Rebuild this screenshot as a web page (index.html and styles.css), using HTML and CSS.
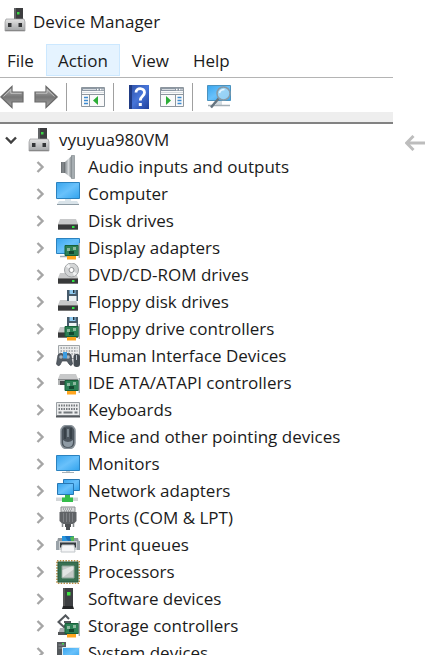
FILE: index.html
```html
<!DOCTYPE html>
<html lang="en">
<head>
<meta charset="utf-8">
<title>Device Manager</title>
<link rel="stylesheet" href="styles.css">
</head>
<body>
<!-- shared icon parts -->
<svg class="defs" width="0" height="0" aria-hidden="true">
  <defs>
    <linearGradient id="screen" x1="0" y1="0" x2="1" y2="1">
      <stop offset="0" stop-color="#38a5ed"/><stop offset=".5" stop-color="#69c1fb"/><stop offset="1" stop-color="#31a3ed"/>
    </linearGradient>
    <linearGradient id="metal" x1="0" y1="0" x2="0" y2="1">
      <stop offset="0" stop-color="#e4e4e4"/><stop offset="1" stop-color="#a2a4a6"/>
    </linearGradient>
    <linearGradient id="steel" x1="0" y1="0" x2="1" y2="0">
      <stop offset="0" stop-color="#858b8f"/><stop offset=".5" stop-color="#d5d9db"/><stop offset="1" stop-color="#777d81"/>
    </linearGradient>
    <linearGradient id="arrow" x1="0" y1="0" x2="0" y2="1">
      <stop offset="0" stop-color="#b9b9b9"/><stop offset=".5" stop-color="#777"/><stop offset="1" stop-color="#a5a5a5"/>
    </linearGradient>
    <linearGradient id="book" x1="0" y1="0" x2="1" y2="1">
      <stop offset="0" stop-color="#2d4fa5"/><stop offset=".5" stop-color="#4775d8"/><stop offset="1" stop-color="#1f3f9b"/>
    </linearGradient>
  </defs>
  <symbol id="i-chevron" viewBox="0 0 16 16"><path d="M5.500 3l5 5-5 5" fill="none" stroke="currentColor" stroke-width="2.400"/></symbol>
  <symbol id="i-device" viewBox="0 0 24 24">
    <path d="M11 0h9v12h-9z" fill="#3c3d3f"/><path d="M11 0h2v12h-2z" fill="#626466"/><path d="M14 4h2.500v2.500H14z" fill="#3bd446"/>
    <path d="M3 11h18l1 3v9H2v-9z" fill="url(#metal)" stroke="#98999b" stroke-width=".7"/>
    <path d="M2.500 22.500h19" stroke="#888"/><path d="M5 15h3.500v4H5zM15.500 15H19v4h-3.500z" fill="#343638"/>
  </symbol>
  <symbol id="i-drive" viewBox="0 0 24 24">
    <path d="M4 10h16l2 5H2z" fill="#c8c9ca"/><path d="M2 15h20v6H2z" fill="#38393a"/>
    <path d="M2 15h20v1H2z" fill="#777"/><path d="M2 20.500h20" stroke="#777"/><path d="M16 17h2.500v2H16z" fill="#2fe344"/>
  </symbol>
  <symbol id="i-card" viewBox="0 0 24 24">
    <path d="M11 20h9v3.500h-9z" fill="#ffa51f"/>
    <path d="M9 9.500h13.500v10H9z" fill="#2d8055" stroke="#176039"/>
    <path d="M11 12h3v3h-3zM17 11h3v3h-3z" fill="#8cb89e"/><path d="M13 15h5v3h-5z" fill="#14482f"/><path d="M23.300 7v15" stroke="#a5abb0" stroke-width="1.400"/>
  </symbol>
  <symbol id="i-floppy" viewBox="0 0 24 24">
    <path d="M11 0h11v11H11z" fill="#465b6b"/><path d="M13.500 0h6v4h-6z" fill="#8ec9ef"/><path d="M13 6h7.500v5H13z" fill="#eef3f5"/><path d="M17 0h1.500v3H17z" fill="#23313b"/>
  </symbol>
  <symbol id="i-keyboard" viewBox="0 0 24 24">
    <path d="M.5 4.500h23v13H.5z" fill="#ebeced" stroke="#999fa3"/><path d="M0 17.500h24v2H0z" fill="#55595d"/>
    <path d="M2.500 7.500h19M2.500 11h19" stroke="#74797d" stroke-width="1.800" stroke-dasharray="1.500 1"/>
    <path d="M2.500 14.500h3m2 0h9m2 0h3" stroke="#74797d" stroke-width="1.800"/>
  </symbol>
  <!-- window frame of the two pane buttons -->
  <symbol id="i-pane" viewBox="0 0 24 24">
    <path d="M.5 2.500h23v19H.5z" fill="#fafafa" stroke="#8d969e"/><path d="M1 3h22v3H1z" fill="#8c97a3"/>
    <path d="M2 4.500h13" stroke="#d6dbe0"/><path d="M16 4.500h1.500m1.500 0h1.500m1 0h1" stroke="#fff" stroke-width="1.500"/>
    <path d="M1 7.500h22" stroke="#d7dce0"/><path d="M1 9.500h22" stroke="#8d969e"/>
  </symbol>
  <symbol id="i-arrow" viewBox="0 0 24 24">
    <path d="M.8 12L12 1.500V7h11v10H12v5.500z" fill="url(#arrow)" stroke="#6a6a6a" stroke-width="1.200"/>
    <path d="M3.500 11.500L10.800 4.500v3.800h10.700" fill="none" stroke="#cfcfcf" stroke-width=".8"/>
  </symbol>
</svg>

<div class="page">
  <main class="window">
    <header class="titlebar">
      <svg class="icon"><use href="#i-device"/></svg>
      <h1>Device Manager</h1>
    </header>

    <nav class="menubar">
      <button>File</button>
      <button class="active">Action</button>
      <button>View</button>
      <button>Help</button>
    </nav>

    <div class="toolbar">
      <button aria-label="Back"><svg class="icon"><use href="#i-arrow"/></svg></button>
      <button aria-label="Forward"><svg class="icon" viewBox="0 0 24 24"><path d="M23.200 12L12 1.500V7H1v10h11v5.500z" fill="url(#arrow)" stroke="#6a6a6a" stroke-width="1.200"/><path d="M2 8.200h11V4.500l7.500 7" fill="none" stroke="#cfcfcf" stroke-width=".8"/></svg></button>
      <span class="separator"></span>
      <button aria-label="Show console tree"><svg class="icon" viewBox="0 0 24 24"><use href="#i-pane"/><path d="M8.500 10v11" stroke="#8d969e"/><path d="M3 12.500h4M3 15.500h4M3 18.500h4" stroke="#3e8bd0" stroke-width="1.500"/><path d="M17 11v9l-5-4.500z" fill="#2cae36"/></svg></button>
      <span class="separator"></span>
      <button class="help" aria-label="Help topics"><svg class="icon" viewBox="0 0 22 24"><path d="M1 0h20v24H1z" fill="url(#book)"/><path d="M1 0h3v24H1z" fill="#213c84"/><path d="M8 7.500C8 2 16.500 2.500 16.500 7.500c0 4-4.200 3.600-4.200 8" fill="none" stroke="#fff" stroke-width="2.800"/><path d="M10.800 18h3v3h-3z" fill="#fff"/></svg></button>
      <button aria-label="Show action pane"><svg class="icon" viewBox="0 0 24 24"><use href="#i-pane"/><path d="M15.500 10v11" stroke="#8d969e"/><path d="M17.500 12.500h4m-4 3h4m-4 3h4" stroke="#3e8bd0" stroke-width="1.500"/><path d="M6 11v9l5-4.500z" fill="#2cae36"/></svg></button>
      <span class="separator"></span>
      <button aria-label="Scan for hardware changes"><svg class="icon" viewBox="0 0 24 24"><path d="M.5.5h23v15H.5z" fill="url(#screen)" stroke="#4b92be"/><path d="M9 16h6v4H9z" fill="#d4dce1"/><path d="M1 20.500h22" stroke="#a4afb6" stroke-width="1.500"/><path d="M12 13l-8 9.500" stroke="#65737e" stroke-width="2.500"/><circle cx="16.500" cy="8.500" r="6.500" fill="#a9d9f5" fill-opacity=".8" stroke="#8799a5" stroke-width="1.500"/><path d="M12.500 8c.5-2.500 2.500-3.500 5-3.500" fill="none" stroke="#e6f6ff" stroke-width="1.500"/></svg></button>
    </div>

    <div class="tree">
      <div class="row root">
        <button class="toggle open" aria-label="Collapse"><svg><use href="#i-chevron"/></svg></button>
        <svg class="icon"><use href="#i-device"/></svg>
        <span>vyuyua980VM</span>
      </div>
      <ul>
        <li class="row">
          <button class="toggle" aria-label="Expand"><svg><use href="#i-chevron"/></svg></button>
          <svg class="icon" viewBox="0 0 24 24"><path d="M5 7h5v11H5z" fill="#6e7376"/><path d="M9 7l7-6.500v23L9 18z" fill="url(#steel)"/><path d="M15.500.5h3v23h-3z" fill="#a6adb1" stroke="#858c90" stroke-width=".7"/><path d="M7 7v11" stroke="#91979a"/></svg>
          <span>Audio inputs and outputs</span>
        </li>
        <li class="row">
          <button class="toggle" aria-label="Expand"><svg><use href="#i-chevron"/></svg></button>
          <svg class="icon" viewBox="0 0 24 24"><path d="M.5.500h23v16H.5z" fill="url(#screen)" stroke="#2b82bf"/><path d="M9 17h6v2H9z" fill="#dce7ed"/><path d="M3 19h18l2 3H1z" fill="#d9e3e9"/><path d="M1 22.500h22" stroke="#8d9ba4"/></svg>
          <span>Computer</span>
        </li>
        <li class="row">
          <button class="toggle" aria-label="Expand"><svg><use href="#i-chevron"/></svg></button>
          <svg class="icon"><use href="#i-drive"/></svg>
          <span>Disk drives</span>
        </li>
        <li class="row">
          <button class="toggle" aria-label="Expand"><svg><use href="#i-chevron"/></svg></button>
          <svg class="icon" viewBox="0 0 24 24"><path d="M.5 2.500h23v15H.5z" fill="url(#screen)" stroke="#2b82bf"/><path d="M4 20.500h7" stroke="#9eabb3" stroke-width="1.500"/><use href="#i-card"/></svg>
          <span>Display adapters</span>
        </li>
        <li class="row">
          <button class="toggle" aria-label="Expand"><svg><use href="#i-chevron"/></svg></button>
          <svg class="icon" viewBox="0 0 24 24"><use href="#i-drive"/><circle cx="15.500" cy="7" r="7" fill="#d3d5d6" stroke="#a1a4a6"/><path d="M15.500 7L10 3.500A6.500 6.500 0 0 1 13 1zM15.500 7l5.500 3.500a6.500 6.500 0 0 1-3 2.500z" fill="#f2f3f4"/><circle cx="15.500" cy="7" r="2.500" fill="#fff" stroke="#8f9294"/></svg>
          <span>DVD/CD-ROM drives</span>
        </li>
        <li class="row">
          <button class="toggle" aria-label="Expand"><svg><use href="#i-chevron"/></svg></button>
          <svg class="icon" viewBox="0 0 24 24"><use href="#i-drive"/><use href="#i-floppy"/></svg>
          <span>Floppy disk drives</span>
        </li>
        <li class="row">
          <button class="toggle" aria-label="Expand"><svg><use href="#i-chevron"/></svg></button>
          <svg class="icon" viewBox="0 0 24 24"><use href="#i-drive"/><use href="#i-floppy"/><use href="#i-card"/></svg>
          <span>Floppy drive controllers</span>
        </li>
        <li class="row">
          <button class="toggle" aria-label="Expand"><svg><use href="#i-chevron"/></svg></button>
          <svg class="icon" viewBox="0 0 24 24"><path d="M2.500 1.500h21v13h-21z" fill="#eceded" stroke="#a0a5a8"/><path d="M4.500 4h17M4.500 7h17M4.500 10h17" stroke="#969b9f" stroke-width="1.500" stroke-dasharray="1.500 1.200"/><path d="M2 11q2-3 5-1h3q3-2 5 1l1.500 9q-1.500 3-3.500 0L11 17H6l-2 4q-2 2-3.500-1z" fill="#555d65" stroke="#3d444b" stroke-width=".7"/><circle cx="5" cy="13" r="1.800" fill="#a9b5be"/><circle cx="12" cy="13" r="1.800" fill="#a9b5be"/><path d="M7 8h4v6.500H7z" fill="#3b9de1"/><rect x="17.500" y="10" width="6.500" height="13" rx="3" fill="#464d54"/><path d="M20.500 11v5" stroke="#b9c3cb"/></svg>
          <span>Human Interface Devices</span>
        </li>
        <li class="row">
          <button class="toggle" aria-label="Expand"><svg><use href="#i-chevron"/></svg></button>
          <svg class="icon" viewBox="0 0 24 24"><path d="M4 3h16l2 5H2z" fill="#c8c9ca"/><path d="M2 8h20v6H2z" fill="#b1b3b4"/><path d="M2 8.500h20" stroke="#858789"/><path d="M4 10h16v4H4z" fill="#444648"/><use href="#i-card"/></svg>
          <span>IDE ATA/ATAPI controllers</span>
        </li>
        <li class="row">
          <button class="toggle" aria-label="Expand"><svg><use href="#i-chevron"/></svg></button>
          <svg class="icon"><use href="#i-keyboard"/></svg>
          <span>Keyboards</span>
        </li>
        <li class="row">
          <button class="toggle" aria-label="Expand"><svg><use href="#i-chevron"/></svg></button>
          <svg class="icon" viewBox="0 0 24 24"><rect x="5" y=".5" width="14" height="23" rx="5.500" fill="#4b545c" stroke="#8a939a" stroke-width="1.500"/><path d="M7 15q5 4 10 0v2q0 5-5 5t-5-5z" fill="#8f9ba5"/><path d="M9 3v11M15 3v11" stroke="#262e35"/><path d="M12 4v8" stroke="#b9c8d3" stroke-width="2"/><path d="M12 4v8" stroke="#20262b" stroke-width=".8"/></svg>
          <span>Mice and other pointing devices</span>
        </li>
        <li class="row">
          <button class="toggle" aria-label="Expand"><svg><use href="#i-chevron"/></svg></button>
          <svg class="icon" viewBox="0 0 24 24"><path d="M.5 3.500h23v15H.5z" fill="url(#screen)" stroke="#2b82bf"/><path d="M10 19h4v1h-4z" fill="#c8d0d5"/><path d="M6 20.500h12" stroke="#a5b0b7"/></svg>
          <span>Monitors</span>
        </li>
        <li class="row">
          <button class="toggle" aria-label="Expand"><svg><use href="#i-chevron"/></svg></button>
          <svg class="icon" viewBox="0 0 24 24"><path d="M7.500.5h16v11h-16z" fill="url(#screen)" stroke="#2777b3"/><path d="M1.500 4.500h16v11h-16z" fill="url(#screen)" stroke="#2777b3"/><path d="M0 18.500h22v3.500H0z" fill="#d2d6d8"/><path d="M9 16h5v2.500h3V23H6v-4.500h3z" fill="#35bd4b"/></svg>
          <span>Network adapters</span>
        </li>
        <li class="row">
          <button class="toggle" aria-label="Expand"><svg><use href="#i-chevron"/></svg></button>
          <svg class="icon" viewBox="0 0 24 24"><path d="M5 1h14v5H5z" fill="#d5d7d8" stroke="#8c8f91"/><path d="M7 3h10M8 5h8" stroke="#777b7e" stroke-dasharray="1 1"/><path d="M3.500 6h17v9l-3 3h-11l-3-3z" fill="#606366"/><path d="M7.500 7v9M10.500 7v9M13.500 7v9M16.500 7v9" stroke="#8a8d90" stroke-width=".7"/><path d="M9 18h6v3H9zM10 21h4v3h-4z" fill="#4d5053"/><path d="M6.500 17v4M17.500 17v4" stroke="#84888b" stroke-width="1.500"/></svg>
          <span>Ports (COM &amp; LPT)</span>
        </li>
        <li class="row">
          <button class="toggle" aria-label="Expand"><svg><use href="#i-chevron"/></svg></button>
          <svg class="icon" viewBox="0 0 24 24"><path d="M2 5h20l1 4H1z" fill="#91989d"/><path d="M6 3h12v6H6z" fill="#2796de"/><path d="M9 3h9v5q-4 2-7-1z" fill="#176fbd"/><path d="M14 4l4-1v5h-3z" fill="#50b853"/><path d="M0 8h24v9H0z" fill="#c9ced1"/><path d="M0 8h3v9H0zM21 8h3v9h-3z" fill="#9aa3a9"/><path d="M4 9.500h16v5H4z" fill="#343a3f"/><path d="M6 12h12l1 7H5z" fill="#f5f6f7" stroke="#c2c7ca"/></svg>
          <span>Print queues</span>
        </li>
        <li class="row">
          <button class="toggle" aria-label="Expand"><svg><use href="#i-chevron"/></svg></button>
          <svg class="icon" viewBox="0 0 24 24"><path d="M1 .8h22.200v22.400H1z" fill="none" stroke="#b78a42" stroke-width="1.600" stroke-dasharray="1.500 1.300"/><path d="M2 2h20v20H2z" fill="#387052" stroke="#275a3e"/><path d="M6 6h12v12H6z" fill="#c4c9c7" stroke="#8ca598"/><path d="M6.500 17.500V10l9-3.500h2v3z" fill="#e2e5e4"/></svg>
          <span>Processors</span>
        </li>
        <li class="row">
          <button class="toggle" aria-label="Expand"><svg><use href="#i-chevron"/></svg></button>
          <svg class="icon" viewBox="0 0 24 24"><path d="M7 1h10v20H7z" fill="#3d3f42"/><path d="M7 1h2v20H7z" fill="#555"/><path d="M11 5h3.500v3.500H11z" fill="#40e043"/><path d="M7 19h10l1 3H6z" fill="#242527"/></svg>
          <span>Software devices</span>
        </li>
        <li class="row">
          <button class="toggle" aria-label="Expand"><svg><use href="#i-chevron"/></svg></button>
          <svg class="icon" viewBox="0 0 24 24"><path d="M13 5L9.500 1.500l-7 6.500L8 13l3-3h5M8 8h7" fill="none" stroke="#53585c" stroke-width="2"/><path d="M4 14h13v6H2z" fill="#a9adb0"/><path d="M2 18h9v3H2z" fill="#505356"/><use href="#i-card"/></svg>
          <span>Storage controllers</span>
        </li>
        <li class="row">
          <button class="toggle" aria-label="Expand"><svg><use href="#i-chevron"/></svg></button>
          <svg class="icon" viewBox="0 0 24 24"><path d="M1 1h9v22H1z" fill="#55595d"/><path d="M2.500 4h6M2.500 7h6" stroke="#919699"/><path d="M6 2h2v1.500H6z" fill="#42d34e"/><path d="M6.500 6.500h17v12h-17z" fill="url(#screen)" stroke="#e1edf4"/></svg>
          <span>System devices</span>
        </li>
      </ul>
    </div>
  </main>

  <aside class="side">
    <a href="#" aria-label="Previous"><svg viewBox="0 0 20 16"><path d="M20 8H2M8.500 1L1.500 8l7 7" fill="none" stroke="#bdbdbd" stroke-width="3"/></svg></a>
  </aside>
</div>
</body>
</html>
```
FILE: styles.css
```css
* {
  box-sizing: border-box;
}

body {
  margin: 0;
  background-color: white;
  color: #1b1b1b;
  font-family: "Open Sans", "Noto Sans", sans-serif;
  font-size: 17px;
  overflow: hidden;
}

button {
  border: none;
  padding: 0;
  background: none;
  color: inherit;
  font: inherit;
}

.defs {
  position: absolute;
}

.page {
  display: flex;
  height: 100vh;
}

.window {
  flex: 1;
  min-width: 0;
  overflow: hidden;
}

.icon {
  display: block;
  flex: none;
  width: 24px;
  height: 24px;
}

.titlebar {
  display: flex;
  align-items: center;
  gap: 6px;
  height: 44px;
  padding: 0 0 4px 3px;
}

.titlebar h1 {
  margin: 0;
  padding-top: 2px;
  font-size: 17px;
  font-weight: normal;
}

.menubar {
  display: flex;
  height: 34px;
  padding-bottom: 1px;
  border-bottom: 1px solid #b4b4b4;
}

.menubar button {
  padding: 1px 11px 0;
  border: 1px solid transparent;
}

.menubar button:first-child {
  padding-left: 6px;
}

.menubar .active {
  background-color: #e5f3ff;
  border-color: #cce8ff;
}

.toolbar {
  display: flex;
  align-items: center;
  height: 44px;
  padding-top: 4px;
  border-bottom: 10px solid #eee;
}

.toolbar button + button {
  margin-left: 10px;
}

.toolbar .help,
.toolbar .help .icon {
  width: 22px;
}

.separator {
  width: 1px;
  height: 28px;
  margin: 0 14px 0 8px;
  background-color: #a0a0a0;
}

.tree {
  padding-top: 2px;
  border-top: 2px solid #828282;
}

.tree ul {
  margin: 0;
  padding: 0;
  list-style: none;
}

.row {
  display: flex;
  align-items: center;
  gap: 8px;
  height: 27px;
  padding-left: 32px;
  white-space: nowrap;
}

.root {
  padding-left: 3px;
}

.toggle {
  width: 16px;
  height: 16px;
  color: #a6a6a6;
}

.toggle svg {
  display: block;
  width: 16px;
  height: 16px;
}

.toggle.open {
  color: #404040;
  transform: rotate(90deg);
}

.side {
  width: 45px;
  padding: 135px 12px 0;
}

.side svg {
  display: block;
  width: 20px;
  height: 16px;
}
```
